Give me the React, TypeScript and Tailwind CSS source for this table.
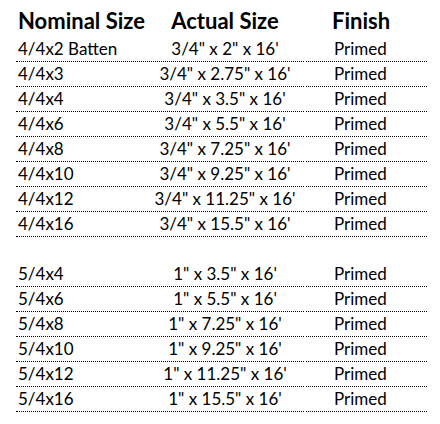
import React from "react";

const group1 = [
  ["4/4x2 Batten", "3/4\" x 2\" x 16'"],
  ["4/4x3", "3/4\" x 2.75\" x 16'"],
  ["4/4x4", "3/4\" x 3.5\" x 16'"],
  ["4/4x6", "3/4\" x 5.5\" x 16'"],
  ["4/4x8", "3/4\" x 7.25\" x 16'"],
  ["4/4x10", "3/4\" x 9.25\" x 16'"],
  ["4/4x12", "3/4\" x 11.25\" x 16'"],
  ["4/4x16", "3/4\" x 15.5\" x 16'"],
];
const group2 = [
  ["5/4x4", "1\" x 3.5\" x 16'"],
  ["5/4x6", "1\" x 5.5\" x 16'"],
  ["5/4x8", "1\" x 7.25\" x 16'"],
  ["5/4x10", "1\" x 9.25\" x 16'"],
  ["5/4x12", "1\" x 11.25\" x 16'"],
  ["5/4x16", "1\" x 15.5\" x 16'"],
];

function Row({ a, b }: { a: string; b: string }) {
  return (
    <div className="flex h-[25px] items-end">
      <div className="flex h-full w-[288px] items-end border-b border-dotted border-black">
        <div className="w-[130px] pl-[2px] leading-[24px]">{a}</div>
        <div className="w-[158px] text-center leading-[24px]">{b}</div>
      </div>
      <div className="ml-[2px] flex h-full w-[121px] items-end border-b border-dotted border-black pl-[28px] leading-[24px]">
        Primed
      </div>
    </div>
  );
}

export default function App() {
  return (
    <div
      className="h-[424px] w-[440px] bg-white pl-[16px] text-[17px] text-black"
      style={{ fontFamily: "Lato, 'Open Sans', sans-serif" }}
    >
      <div className="flex h-[37px] items-end pb-[2px] text-[22px] font-bold leading-[28px]">
        <div className="w-[130px] pl-[2px]">Nominal Size</div>
        <div className="w-[158px] text-center">Actual Size</div>
        <div className="ml-[2px] w-[121px] pl-[26px]">Finish</div>
      </div>
      {group1.map(([a, b]) => (
        <Row key={a} a={a} b={b} />
      ))}
      <div className="h-[25px]" />
      {group2.map(([a, b]) => (
        <Row key={a} a={a} b={b} />
      ))}
    </div>
  );
}
